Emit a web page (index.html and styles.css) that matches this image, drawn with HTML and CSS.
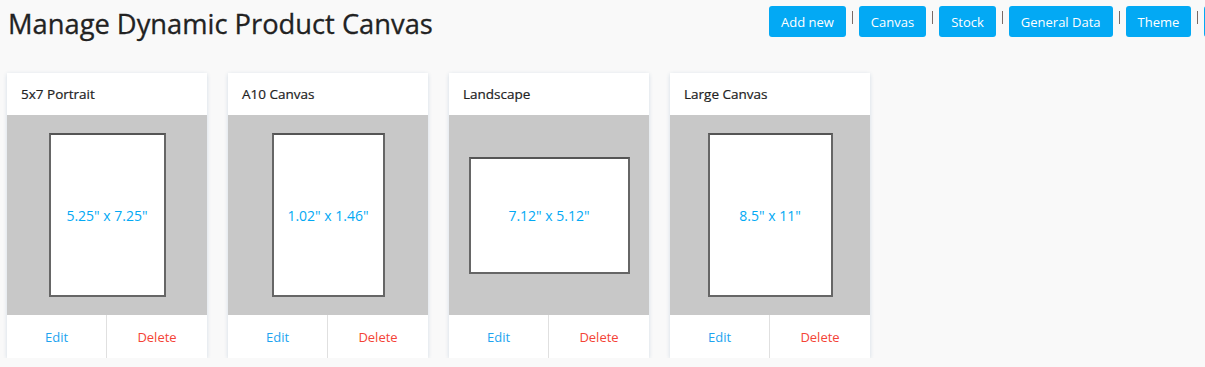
FILE: index.html
```html
<!DOCTYPE html>
<html lang="en">
<head>
    <meta charset="UTF-8">
    <meta name="viewport" content="width=device-width, initial-scale=1.0">
    <title>Manage Dynamic Product Canvas</title>
    <link rel="stylesheet" href="styles.css">
</head>
<body>
    <div class="page">
        <div class="page-header">
            <h1>Manage Dynamic Product Canvas</h1>
            <div class="toolbar">
                <button class="tool-btn">Add new</button>
                <span class="sep"></span>
                <button class="tool-btn">Canvas</button>
                <span class="sep"></span>
                <button class="tool-btn">Stock</button>
                <span class="sep"></span>
                <button class="tool-btn">General Data</button>
                <span class="sep"></span>
                <button class="tool-btn">Theme</button>
                <span class="sep"></span>
                <button class="tool-btn icon-btn" aria-label="More"></button>
            </div>
        </div>

        <div class="canvas-grid">
            <div class="canvas-card">
                <div class="card-title">5x7 Portrait</div>
                <div class="card-preview">
                    <div class="sheet" style="width: 117px; height: 164px;">5.25" x 7.25"</div>
                </div>
                <div class="card-actions">
                    <a class="edit-link">Edit</a>
                    <a class="delete-link">Delete</a>
                </div>
            </div>
            <div class="canvas-card">
                <div class="card-title">A10 Canvas</div>
                <div class="card-preview">
                    <div class="sheet" style="width: 113px; height: 164px;">1.02" x 1.46"</div>
                </div>
                <div class="card-actions">
                    <a class="edit-link">Edit</a>
                    <a class="delete-link">Delete</a>
                </div>
            </div>
            <div class="canvas-card">
                <div class="card-title">Landscape</div>
                <div class="card-preview">
                    <div class="sheet" style="width: 161px; height: 117px;">7.12" x 5.12"</div>
                </div>
                <div class="card-actions">
                    <a class="edit-link">Edit</a>
                    <a class="delete-link">Delete</a>
                </div>
            </div>
            <div class="canvas-card">
                <div class="card-title">Large Canvas</div>
                <div class="card-preview">
                    <div class="sheet" style="width: 125px; height: 164px;">8.5" x 11"</div>
                </div>
                <div class="card-actions">
                    <a class="edit-link">Edit</a>
                    <a class="delete-link">Delete</a>
                </div>
            </div>
        </div>
    </div>
</body>
</html>
```

FILE: styles.css
```css
* {
    margin: 0;
    padding: 0;
    box-sizing: border-box;
}

body {
    font-family: 'Open Sans', 'Noto Sans', sans-serif;
    background: #f9f9f9;
    color: #333;
    overflow: hidden;
}

.page {
    padding: 6px 0 0 7px;
}

.page-header {
    display: flex;
    align-items: flex-start;
    white-space: nowrap;
}

.page-header h1 {
    flex: 0 0 762px;
    font-size: 27.3px;
    font-weight: 400;
    color: #222;
    line-height: 36px;
    padding-left: 1px;
    -webkit-text-stroke: 0.3px #222;
}

.toolbar {
    display: flex;
    align-items: flex-start;
    flex-shrink: 0;
}

.tool-btn {
    background: #03a9f4;
    color: white;
    border: none;
    border-radius: 3px;
    height: 31px;
    padding: 0 12px;
    font-family: inherit;
    font-size: 13px;
    cursor: pointer;
}

.icon-btn {
    width: 30px;
}

.sep {
    width: 13px;
    height: 13px;
    margin-top: 5px;
    display: flex;
    justify-content: center;
}

.sep::before {
    content: '';
    width: 1px;
    background: #7a6a66;
}

.canvas-grid {
    display: flex;
    gap: 21px;
    margin-top: 31px;
}

.canvas-card {
    width: 200px;
    background: white;
    box-shadow: 0 1px 4px rgba(40, 90, 140, 0.18);
}

.card-title {
    height: 42px;
    padding: 0 14px;
    display: flex;
    align-items: center;
    font-size: 13.5px;
    font-weight: 400;
    color: #222;
    -webkit-text-stroke: 0.2px #222;
}

.card-preview {
    height: 200px;
    background: #c8c8c8;
    display: flex;
    align-items: center;
    justify-content: center;
}

.sheet {
    background: white;
    border: 2px solid #666;
    border-top-color: #555;
    display: flex;
    align-items: center;
    justify-content: center;
    color: #03a9f4;
    font-size: 14px;
}

.card-actions {
    display: grid;
    grid-template-columns: 1fr 1fr;
    height: 43px;
}

.card-actions a {
    display: flex;
    align-items: center;
    justify-content: center;
    font-size: 13px;
    cursor: pointer;
}

.edit-link {
    color: #1ea4f0;
    border-right: 1px solid #e0e0e0;
}

.delete-link {
    color: #f44336;
}
```
